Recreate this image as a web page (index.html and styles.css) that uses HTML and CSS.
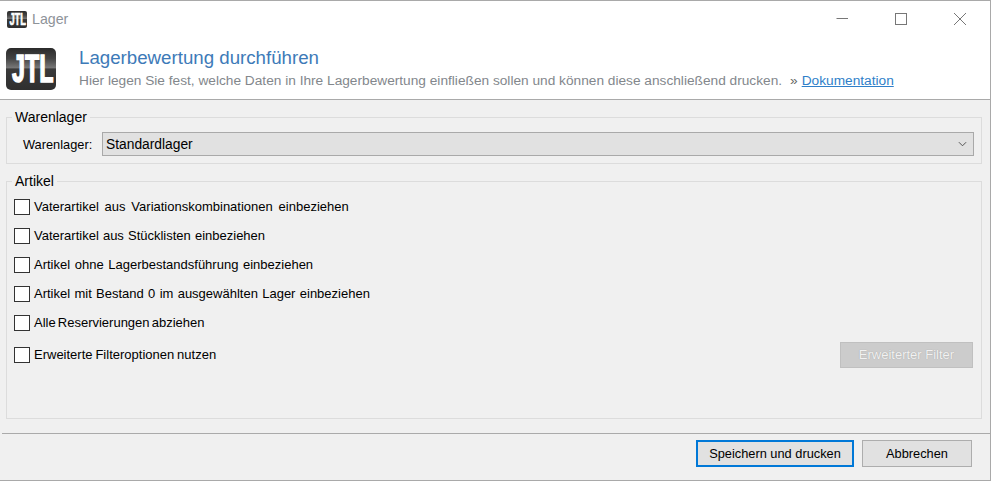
FILE: index.html
```html
<!DOCTYPE html>
<html lang="de">
<head>
<meta charset="utf-8">
<title>Lager</title>
<link rel="stylesheet" href="styles.css">
</head>
<body>
<div class="window">
  <div class="head">
    <div class="titlebar">
      <svg class="logo-small" viewBox="0 0 50 42"><use href="#jtl"/></svg>
      <span class="win-title">Lager</span>
      <div class="controls">
        <svg class="ctl" viewBox="0 0 14 14"><path d="M1.5 6.5H13" /></svg>
        <svg class="ctl" viewBox="0 0 14 14"><rect x="1.5" y="1.5" width="11" height="11"/></svg>
        <svg class="ctl" viewBox="0 0 14 14"><path d="M1 1l12 12M13 1L1 13"/></svg>
      </div>
    </div>
    <div class="banner">
      <svg class="logo" viewBox="0 0 50 42">
        <defs>
          <linearGradient id="bg" x1="0" y1="0" x2="0" y2="1">
            <stop offset="0" stop-color="#2a2a2a"/>
            <stop offset=".25" stop-color="#444"/>
            <stop offset=".47" stop-color="#777"/>
            <stop offset=".5" stop-color="#3a3a3a"/>
            <stop offset="1" stop-color="#2f2f2f"/>
          </linearGradient>
          <g id="jtl">
            <rect width="50" height="42" rx="5" fill="url(#bg)"/>
            <text class="logo-text" transform="translate(6 34) scale(.6 1)" x="0" y="0">JTL</text>
          </g>
        </defs>
        <use href="#jtl"/>
      </svg>
      <div class="banner-text">
        <h1 class="heading">Lagerbewertung durchführen</h1>
        <p class="sub">Hier legen Sie fest, welche Daten in Ihre Lagerbewertung einfließen sollen und können diese anschließend drucken.<span class="more">»</span><a class="doc" href="#">Dokumentation</a></p>
      </div>
    </div>
  </div>
  <div class="content">
    <fieldset class="group group-store">
      <legend>Warenlager</legend>
      <div class="store-row">
        <label class="store-label">Warenlager:</label>
        <div class="select">
          <span>Standardlager</span>
          <svg class="chev" viewBox="0 0 10 6"><path d="M1 1l4 4 4-4"/></svg>
        </div>
      </div>
    </fieldset>
    <fieldset class="group group-items">
      <legend>Artikel</legend>
      <div class="row"><span class="box"></span><span class="cap spaced-wide">Vaterartikel aus Variationskombinationen einbeziehen</span></div>
      <div class="row"><span class="box"></span><span class="cap spaced-tiny">Vaterartikel aus Stücklisten einbeziehen</span></div>
      <div class="row"><span class="box"></span><span class="cap spaced">Artikel ohne Lagerbestandsführung einbeziehen</span></div>
      <div class="row"><span class="box"></span><span class="cap spaced-slight">Artikel mit Bestand 0 im ausgewählten Lager einbeziehen</span></div>
      <div class="row"><span class="box"></span><span class="cap tight">Alle Reservierungen abziehen</span></div>
      <div class="row row-last"><span class="box"></span><span class="cap tight-less">Erweiterte Filteroptionen nutzen</span><button class="btn-filter">Erweiterter Filter</button></div>
    </fieldset>
  </div>
  <div class="footer">
    <button class="btn btn-primary">Speichern und drucken</button>
    <button class="btn btn-cancel">Abbrechen</button>
  </div>
</div>
</body>
</html>
```
FILE: styles.css
```css
* { box-sizing: border-box; }
html, body { margin: 0; padding: 0; }
body {
  width: 991px;
  height: 481px;
  overflow: hidden;
  font-family: "Liberation Sans", Arial, sans-serif;
  font-size: 13px;
  color: #000;
  background: #fff;
}
.window {
  width: 991px;
  height: 481px;
  display: flex;
  flex-direction: column;
  border-top: 1px solid #a9a9a9;
  border-right: 1px solid #a9a9a9;
  border-bottom: 1px solid #a9a9a9;
  background: #f0f0f0;
}
.head {
  height: 99px;
  background: #fff;
  border-bottom: 1px solid #a9a9a9;
  flex: none;
}
.titlebar {
  height: 36px;
  display: flex;
  align-items: center;
  padding: 0 0 0 7px;
}
.logo-small { width: 20px; height: 17px; flex: none; }
.win-title { margin-left: 5px; font-size: 14.2px; color: #8e9399; }
.controls {
  margin-left: auto;
  display: flex;
  gap: 45px;
  padding-right: 23px;
}
.ctl { width: 14px; height: 14px; fill: none; stroke: #777; stroke-width: 1; }
.banner {
  display: flex;
  padding: 11px 0 0 6px;
}
.logo { width: 50px; height: 42px; flex: none; }
.logo-text {
  font-family: "Liberation Sans", sans-serif;
  font-weight: 700;
  font-size: 39px;
  fill: #fff;
  stroke: #fff;
  stroke-width: 1.5px;
}
.banner-text { margin-left: 23px; margin-top: -1px; }
.heading {
  margin: 0;
  font-size: 18.7px;
  font-weight: 400;
  line-height: 22px;
  color: #3d7ab8;
}
.sub {
  margin: 3px 0 0;
  font-size: 13.7px;
  line-height: 18px;
  color: #83878c;
  white-space: nowrap;
}
.more { margin: 0 4px 0 8px; color: #666; }
.doc { color: #2f7fc9; text-decoration: underline; }
.content {
  flex: 1;
  padding: 9px 8px 0 6px;
}
.group {
  margin: 0;
  border: 1px solid #dcdcdc;
  padding: 0;
  min-width: 0;
}
.group legend {
  margin-left: 5px;
  padding: 0 3px;
  font-size: 14px;
  line-height: 16px;
}
.group-store { height: 55px; }
.store-row {
  display: flex;
  align-items: center;
  padding: 7px 7px 0 16px;
}
.store-label { width: 79px; flex: none; font-size: 12.8px; }
.select {
  flex: 1;
  height: 24px;
  background: #e1e1e1;
  border: 1px solid #a9a9a9;
  display: flex;
  align-items: center;
  justify-content: space-between;
  padding: 0 6px 0 3px;
  font-size: 13.8px;
}
.chev { width: 9px; height: 6px; fill: none; stroke: #444; stroke-width: 1; }
.group-items {
  height: 246px;
  margin-top: 9px;
}
.row { display: flex; align-items: center; height: 29px; padding: 0 8px 0 7px; }
.row:nth-of-type(1) { margin-top: 3px; }
.row-last { height: 35px; }
.box {
  width: 16px;
  height: 16px;
  flex: none;
  background: #fff;
  border: 1px solid #333;
  margin-right: 4px;
}
.cap { white-space: nowrap; }
.spaced-wide { word-spacing: 2.2px; }
.spaced { word-spacing: 1px; }
.spaced-slight { word-spacing: .7px; }
.spaced-tiny { word-spacing: .5px; }
.tight { word-spacing: -1.5px; }
.tight-less { word-spacing: -.7px; }
.btn-filter {
  margin-left: auto;
  width: 133px;
  height: 26px;
  background: #cccccc;
  border: 1px solid #c0c0c0;
  color: #f2f2f2;
  font: inherit;
  text-shadow: 0 0 1px #999;
  padding: 0;
}
.footer {
  flex: none;
  height: 47px;
  margin-left: 2px;
  border-top: 1px solid #aaa;
  display: flex;
  justify-content: flex-end;
  gap: 8px;
  padding: 6px 18px 0 0;
}
.btn {
  height: 27px;
  background: #e1e1e1;
  border: 1px solid #adadad;
  font: inherit;
  font-size: 12.8px;
  color: #000;
  padding: 0;
}
.btn-primary { width: 158px; border: 2px solid #0078d7; }
.btn-cancel { width: 110px; }
```
